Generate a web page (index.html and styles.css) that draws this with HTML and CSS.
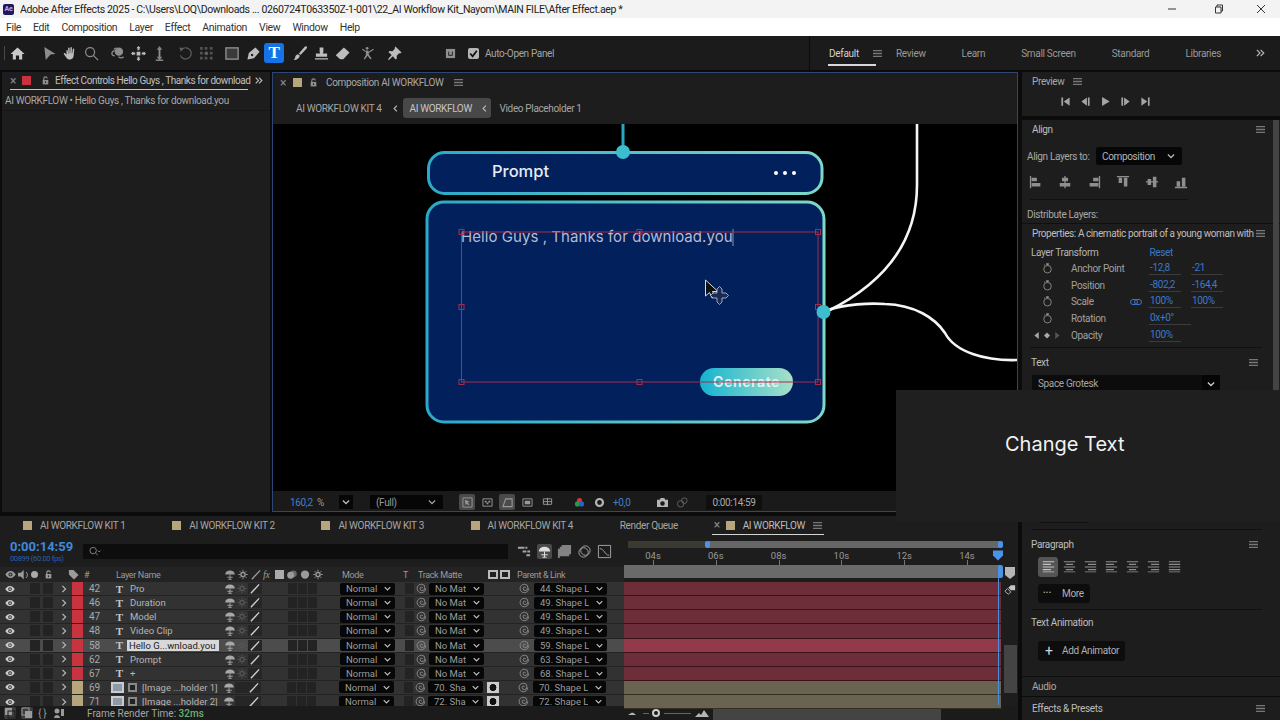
FILE: index.html
```html
<!DOCTYPE html>
<html lang="en">
<head>
    <meta charset="UTF-8">
    <meta name="viewport" content="width=device-width, initial-scale=1.0">
    <title>Adobe After Effects 2025</title>
    <link rel="stylesheet" href="styles.css">
</head>
<body>
    <svg class="defs" aria-hidden="true">
        <symbol id="i-home" viewBox="0 0 16 16"><path d="M8 1.500 15.500 8.500H13V14.500H9.700V10H6.300V14.500H3V8.500H.5Z"/></symbol>
        <symbol id="i-arrow" viewBox="0 0 16 16"><path d="M2.500 1 14.500 8.600 9 9 4 15Z"/></symbol>
        <symbol id="i-hand" viewBox="0 0 16 16"><path d="M3.600 5.200c0-1.100 1.400-1.100 1.500 0l.4 3 .3-.1-.4-5.600c0-1.100 1.500-1.100 1.600 0l.3 5.300h.4l.2-6c0-1.100 1.600-1.100 1.600 0l-.1 6.200h.4l.7-4.700c.2-1.100 1.600-.9 1.500.2l-.6 6.700c-.1 2.600-1.900 4.300-4.100 4.300-1.900 0-3-.8-4-2.500L1 8.700c-.6-1 .6-1.800 1.400-1l1.500 1.600Z"/></symbol>
        <symbol id="i-zoom" viewBox="0 0 16 16"><circle class="ln" cx="6.500" cy="6.500" r="4.800"/><path class="ln" d="M10 10 15 15"/></symbol>
        <symbol id="i-orbit" viewBox="0 0 16 16"><circle cx="9.500" cy="6" r="4.500"/><path class="ln" d="M5 5C1 6 1 10 5 10.500M4 3.500 7 2M9 11.500C11 13 13 13 14.500 11.500"/></symbol>
        <symbol id="i-move" viewBox="0 0 16 16"><path d="M7 1h2v3.500h-2ZM7 11.500h2V15H7ZM1 7h3.500v2H1ZM11.500 7H15v2h-3.500Z"/><path d="M8 0 10.200 2.500H5.800ZM8 16 5.800 13.500h4.400ZM0 8 2.500 5.800v4.400ZM16 8l-2.500 2.200V5.800ZM6 6h4v4H6Z"/></symbol>
        <symbol id="i-dolly" viewBox="0 0 16 16"><path d="M7 3h2v9H7Z"/><path d="M8 0 11 4H5ZM8 15.500 5 11.500h6ZM4 14.500h8V16H4Z" opacity=".9"/></symbol>
        <symbol id="i-rotate" viewBox="0 0 16 16"><path class="ln" d="M4 3.500A6 6 0 1 1 2.500 10"/><path d="M1.500 1.500 6.500 2 3 6Z"/></symbol>
        <symbol id="i-pan" viewBox="0 0 16 16"><path d="M1 1h3v3H1ZM6 1h3v3H6ZM11.500 1h3v3h-3ZM1 6h3v3H1ZM11.500 6h3v3h-3ZM1 11.500h3v3H1ZM6 11.500h3v3H6ZM11.500 11.500h3v3h-3Z" opacity=".8"/><circle cx="7.800" cy="7.800" r="2"/></symbol>
        <symbol id="i-rect" viewBox="0 0 16 16"><rect x="1" y="2" width="13" height="12" fill="#3a3a3a" stroke="currentColor" stroke-width="1.500"/></symbol>
        <symbol id="i-pen" viewBox="0 0 16 16"><path d="M10 1.500 14.500 6 8.500 13 1.500 14.500 3 7.500Z"/><circle cx="6.500" cy="9.500" r="1.300" fill="#222"/></symbol>
        <symbol id="i-brush" viewBox="0 0 16 16"><path d="M14.500.5c.8.8.6 1.500-.2 2.400L8 9.600 6.300 8 12.500.9c.8-.8 1.400-1 2-.4ZM5.500 8.800 7.300 10.500C6.800 13.500 4 15.200.5 15c1.500-1.100 1.700-2.100 2-3.700.3-1.400 1.700-2.400 3-2.500Z"/></symbol>
        <symbol id="i-stamp" viewBox="0 0 16 16"><path d="M6 1.500h4V6l-.6 2H14v3.500H2V8h4.600L6 6ZM1 13h14v1.500H1Z"/></symbol>
        <symbol id="i-eraser" viewBox="0 0 16 16"><path d="M9.500 1.500 15.500 7 8.800 14H5.500L.8 9.800Z"/></symbol>
        <symbol id="i-puppet" viewBox="0 0 16 16"><circle cx="6.500" cy="2.500" r="1.500"/><path d="M5.300 4.800h2.500l.6 4.200 3 4.500-1.400.7L7 10.500l-3 3.800-1-.8 2.200-4ZM8 6l5-3 .6.9-5.400 3.600Z"/><path class="ln" d="M1.500 3.500 5 6"/></symbol>
        <symbol id="i-pin" viewBox="0 0 16 16"><path d="M9 .5 15.500 7l-1.600 1-1-.3-2.600 2.600.2 3-1.300 1.200L6.300 11 2 15l-1-1 4-4.300-3.500-3.200L2.800 5.300l3 .2L8.400 3l-.3-1Z"/></symbol>
        <symbol id="i-eye" viewBox="0 0 16 16"><path d="M8 3C4.500 3 2 5.500.5 8 2 10.500 4.500 13 8 13s6-2.500 7.500-5C14 5.500 11.500 3 8 3Zm0 2a3 3 0 1 1 0 6 3 3 0 0 1 0-6Z"/><circle cx="8" cy="8" r="1.400"/></symbol>
        <symbol id="i-chev-d" viewBox="0 0 16 16"><path class="ln2" d="M3 5.500 8 10.500 13 5.500"/></symbol>
        <symbol id="i-chev-r" viewBox="0 0 16 16"><path class="ln2" d="M5.500 3 10.500 8 5.500 13"/></symbol>
        <symbol id="i-chev-l" viewBox="0 0 16 16"><path class="ln2" d="M10.500 3 5.500 8 10.500 13"/></symbol>
        <symbol id="i-more" viewBox="0 0 16 16"><path class="ln2" d="M3 3 8 8 3 13M9 3 14 8 9 13"/></symbol>
        <symbol id="i-menu" viewBox="0 0 10 10"><path d="M0 1h10v1.400H0ZM0 4.300h10v1.400H0ZM0 7.600h10V9H0Z"/></symbol>
        <symbol id="i-lock" viewBox="0 0 16 16"><path d="M3 7h10v8H3Z"/><path class="ln2" d="M5 7V4.500a3 3 0 0 1 6 0"/><rect x="7" y="9.500" width="2" height="3" fill="#222"/></symbol>
        <symbol id="i-shy" viewBox="0 0 16 16"><path d="M1 8a7 6 0 0 1 14 0Z"/><path class="ln" d="M8 8v7M4 12h8M5.500 15h5"/></symbol>
        <symbol id="i-gear" viewBox="0 0 16 16"><circle class="ln2" cx="8" cy="8" r="3"/><path class="ln" d="M8 1v3M8 12v3M1 8h3M12 8h3M3 3l2 2M11 11l2 2M13 3l-2 2M5 11l-2 2"/></symbol>
        <symbol id="i-slash" viewBox="0 0 16 16"><path class="ln2" d="M2 15 14 2"/></symbol>
        <symbol id="i-spiral" viewBox="0 0 16 16"><path class="ln" d="M14 8A6.200 6.200 0 1 1 8 1.800 5 5 0 0 1 13 7a4 4 0 0 1-4 4 3 3 0 0 1-3-3 2 2 0 0 1 2-2 1.500 1.500 0 0 1 1.500 1.500"/></symbol>
        <symbol id="i-watch" viewBox="0 0 16 16"><circle class="ln" cx="8" cy="9" r="5.500"/><path class="ln2" d="M6 1.500h4M8 3.500V1.500"/><path class="ln" d="M4.500 3.500 3 2.500"/></symbol>
        <symbol id="i-left" viewBox="0 0 16 16"><path d="M2 2h2.500v12H2ZM14 2v12L5.500 8Z"/></symbol>
        <symbol id="i-step" viewBox="0 0 16 16"><path d="M10 2v12L2 8ZM11.500 2H14v12h-2.500Z"/></symbol>
        <symbol id="i-play" viewBox="0 0 16 16"><path d="M3 1.500 14 8 3 14.500Z"/></symbol>
        <symbol id="i-align" viewBox="0 0 16 16"><path d="M1 1h1.500v14H1ZM3 3h6v4H3ZM3 9h10v4H3Z"/></symbol>
        <symbol id="i-align-c" viewBox="0 0 16 16"><path d="M7.200 1h1.500v14H7.200ZM4.500 3h7v4h-7ZM2 9h12v4H2Z"/></symbol>
        <symbol id="i-para-l" viewBox="0 0 16 16"><path d="M1 1.500h14v1.400H1ZM1 4.700h10v1.400H1ZM1 7.900h14v1.400H1ZM1 11.100h10v1.400H1ZM1 14h14v1H1Z"/></symbol>
        <symbol id="i-para-c" viewBox="0 0 16 16"><path d="M1 1.500h14v1.400H1ZM3.500 4.700h9v1.400h-9ZM1 7.900h14v1.400H1ZM3.500 11.100h9v1.400h-9ZM1 14h14v1H1Z"/></symbol>
        <symbol id="i-para-r" viewBox="0 0 16 16"><path d="M1 1.500h14v1.400H1ZM5 4.700h10v1.400H5ZM1 7.900h14v1.400H1ZM5 11.100h10v1.400H5ZM1 14h14v1H1Z"/></symbol>
        <symbol id="i-para-j" viewBox="0 0 16 16"><path d="M1 1.500h14v1.400H1ZM1 4.700h14v1.400H1ZM1 7.900h14v1.400H1ZM1 11.100h14v1.400H1ZM1 14h14v1H1Z"/></symbol>
    </svg>

    <header class="titlebar">
        <span class="ae-logo">Ae</span>
        <span class="title-text">Adobe After Effects 2025 - C:\Users\LOQ\Downloads ... 0260724T063350Z-1-001\22_AI Workflow Kit_Nayom\MAIN FILE\After Effect.aep *</span>
        <span class="win-btns">
            <svg class="win-min" viewBox="0 0 10 10"><path d="M1 5h8" /></svg>
            <svg class="win-max" viewBox="0 0 10 10"><path d="M1.500 3h5.500v6H1.500ZM3 3V1h5.500v6H7" /></svg>
            <svg class="win-close" viewBox="0 0 10 10"><path d="M1 1l8 8M9 1l-8 8" /></svg>
        </span>
    </header>
    <nav class="menubar">
        <span>File</span><span>Edit</span><span>Composition</span><span>Layer</span><span>Effect</span><span>Animation</span><span>View</span><span>Window</span><span>Help</span>
    </nav>
    <div class="toolbar">
        <div class="tools">
            <span class="tool home"><svg><use href="#i-home"/></svg></span>
            <span class="tool gap"><svg class="dim"><use href="#i-arrow"/></svg></span>
            <span class="tool"><svg><use href="#i-hand"/></svg></span>
            <span class="tool"><svg class="dim"><use href="#i-zoom"/></svg></span>
            <span class="tool gap"><svg class="dim"><use href="#i-orbit"/></svg></span>
            <span class="tool"><svg><use href="#i-move"/></svg></span>
            <span class="tool"><svg class="dim"><use href="#i-dolly"/></svg></span>
            <span class="tool gap"><svg class="faint"><use href="#i-rotate"/></svg></span>
            <span class="tool"><svg class="faint"><use href="#i-pan"/></svg></span>
            <span class="tool gap"><svg class="dim"><use href="#i-rect"/></svg></span>
            <span class="tool"><svg><use href="#i-pen"/></svg></span>
            <span class="tool tool-on">T</span>
            <span class="tool gap"><svg><use href="#i-brush"/></svg></span>
            <span class="tool"><svg><use href="#i-stamp"/></svg></span>
            <span class="tool"><svg><use href="#i-eraser"/></svg></span>
            <span class="tool gap"><svg class="dim"><use href="#i-puppet"/></svg></span>
            <span class="tool gap"><svg><use href="#i-pin"/></svg></span>
        </div>
        <div class="auto-open">
            <svg class="auto-ic" viewBox="0 0 12 12"><path d="M1 1h10v10H1Z"/><path d="M4 4v4M8 4v4M4 8h4" stroke="#1a1a1a" fill="none"/></svg>
            <span class="checkbox"><svg viewBox="0 0 10 10"><path d="M2 5l2.200 2.500L8 2.500"/></svg></span>
            <span>Auto-Open Panel</span>
        </div>
        <div class="workspaces">
            <span class="ws-active">Default</span>
            <svg class="menu-ic ws-menu"><use href="#i-menu"/></svg>
            <span>Review</span><span>Learn</span><span>Small Screen</span><span>Standard</span><span>Libraries</span>
            <svg class="ws-more"><use href="#i-more"/></svg>
        </div>
    </div>

    <main class="workspace">
        <div class="main-col">
            <div class="top-row">
                <section class="panel effects">
                    <div class="fx-tab">
                        <span class="close">×</span><i class="swatch red"></i>
                        <svg class="lock"><use href="#i-lock"/></svg>
                        <span class="fx-title">Effect Controls Hello Guys , Thanks for download</span>
                        <svg class="fx-more"><use href="#i-more"/></svg>
                    </div>
                    <div class="fx-sub">AI WORKFLOW • Hello Guys , Thanks for download.you</div>
                </section>

                <section class="panel comp">
                    <div class="comp-tab">
                        <span class="close">×</span><i class="swatch tan"></i>
                        <svg class="lock"><use href="#i-lock"/></svg>
                        <span>Composition AI WORKFLOW</span>
                        <svg class="menu-ic"><use href="#i-menu"/></svg>
                    </div>
                    <div class="crumbs">
                        <span>AI WORKFLOW KIT 4</span>
                        <svg class="crumb-chev"><use href="#i-chev-l"/></svg>
                        <span class="crumb-on">AI WORKFLOW<svg class="crumb-chev"><use href="#i-chev-l"/></svg></span>
                        <span>Video Placeholder 1</span>
                    </div>
                    <div class="viewer">
                        <svg class="art" viewBox="273 124 744 367">
                            <defs>
                                <linearGradient id="edge" gradientUnits="userSpaceOnUse" x1="426" y1="0" x2="825" y2="0">
                                    <stop offset="0" stop-color="#2aa9c8"/><stop offset="1" stop-color="#7ed8c8"/>
                                </linearGradient>
                                <linearGradient id="pill" gradientUnits="userSpaceOnUse" x1="700" y1="0" x2="793" y2="0">
                                    <stop offset="0" stop-color="#14b4d0"/><stop offset="1" stop-color="#a8e0c8"/>
                                </linearGradient>
                            </defs>
                            <path class="wire" d="M917 124V185C917 245 880 285 828 311"/>
                            <path class="wire" d="M828 310C845 304 870 303 885 304 915 305 935 318 945 333 955 352 985 361 1017 360"/>
                            <path class="link" d="M623 124V152"/>
                            <rect class="node" x="428.500" y="152.500" width="393.500" height="41" rx="16"/>
                            <rect class="node" x="427" y="202" width="397" height="220" rx="17"/>
                            <circle class="port" cx="623" cy="152" r="7"/>
                            <text class="prompt" x="492" y="177">Prompt</text>
                            <circle class="dot" cx="776" cy="173" r="2"/><circle class="dot" cx="785" cy="173" r="2"/><circle class="dot" cx="794" cy="173" r="2"/>
                            <rect class="pill" x="700" y="368" width="93" height="28" rx="14"/>
                            <text class="generate" x="746.500" y="387">Generate</text>
                            <text class="hello" x="461" y="242">Hello Guys , Thanks for download.you</text>
                            <path class="caret" d="M733 229V246"/>
                            <rect class="sel" x="461.500" y="232" width="356.500" height="150"/>
                            <rect class="grip" x="459" y="229.500" width="5" height="5"/><rect class="grip" x="637" y="229.500" width="5" height="5"/><rect class="grip" x="815.500" y="229.500" width="5" height="5"/>
                            <rect class="grip" x="459" y="304.500" width="5" height="5"/><rect class="grip" x="815.500" y="304.500" width="5" height="5"/>
                            <rect class="grip" x="459" y="379.500" width="5" height="5"/><rect class="grip" x="637" y="379.500" width="5" height="5"/><rect class="grip" x="815.500" y="379.500" width="5" height="5"/>
                            <circle class="port" cx="823.500" cy="312" r="7"/>
                            <path class="pointer" d="M705.500 280V296L709.500 292.500 712 298 715 297 712.500 291.500H718Z"/>
                            <path class="pointer-move" d="M719.500 289.500 722 292V296H726L728.500 298.500 726 301H722V305L719.500 307.500 717 305V301H713L710.500 298.500 713 296H717V292Z" transform="translate(0 -3)"/>
                        </svg>
                    </div>
                    <div class="comp-foot">
                        <span class="blue zoom-val">160,2</span><span class="pct">%</span>
                        <span class="mini-sel"><svg class="chev"><use href="#i-chev-d"/></svg></span>
                        <span class="res-sel">(Full)<svg class="chev"><use href="#i-chev-d"/></svg></span>
                        <span class="foot-ic foot-on"><svg viewBox="0 0 12 12"><path d="M1 1h10v10H1Z" fill="none" stroke="currentColor"/><path d="M3 3l5 2-2 1 2 2-1 1-2-2-1 2Z"/></svg></span>
                        <span class="foot-ic"><svg viewBox="0 0 12 12"><path d="M1 2h10v8H1Z" fill="none" stroke="currentColor"/><path d="M3 4h2v2H3ZM7 4h2v2H7ZM5 6h2v2H5Z"/></svg></span>
                        <span class="foot-ic foot-on"><svg viewBox="0 0 12 12"><path d="M1 10.500 4 2h7v8.500Z" fill="none" stroke="currentColor" stroke-width="1.200"/></svg></span>
                        <span class="foot-ic"><svg viewBox="0 0 12 12"><path d="M1 2h10v8H1Z" fill="none" stroke="currentColor"/><path d="M3 4h6v4H3Z"/></svg></span>
                        <span class="foot-ic"><svg viewBox="0 0 12 12"><path d="M1.500 2h9v6h-9ZM6 1v8M1 5h10" fill="none" stroke="currentColor"/></svg></span>
                        <span class="rgb"><svg viewBox="0 0 12 12"><circle cx="6" cy="4" r="2.800" fill="#d33"/><circle cx="3.800" cy="7.500" r="2.800" fill="#2a9a4a"/><circle cx="8.200" cy="7.500" r="2.800" fill="#2a60c8"/></svg></span>
                        <span class="exposure"><svg viewBox="0 0 12 12"><circle cx="6" cy="6" r="3.800" fill="none" stroke="currentColor" stroke-width="2.400"/></svg></span>
                        <span class="blue exp-val">+0,0</span>
                        <span class="cam"><svg viewBox="0 0 14 12"><path d="M1 3h3l1-2h4l1 2h3v8H1Zm6 1.500a2.500 2.500 0 1 0 0 5 2.500 2.500 0 0 0 0-5Z"/></svg></span>
                        <span class="snap"><svg viewBox="0 0 14 12"><circle cx="5" cy="7.500" r="3.500" fill="none" stroke="currentColor"/><circle cx="9" cy="4" r="3" fill="none" stroke="currentColor"/></svg></span>
                        <span class="timecode">0:00:14:59</span>
                    </div>
                </section>
            </div>

            <section class="panel timeline">
                <div class="tl-tabs">
                    <span class="tl-tab"><i class="swatch tan"></i>AI WORKFLOW KIT 1</span>
                    <span class="tl-tab"><i class="swatch tan"></i>AI WORKFLOW KIT 2</span>
                    <span class="tl-tab"><i class="swatch tan"></i>AI WORKFLOW KIT 3</span>
                    <span class="tl-tab"><i class="swatch tan"></i>AI WORKFLOW KIT 4</span>
                    <span class="tl-tab">Render Queue</span>
                    <span class="tl-tab tl-tab-on"><span class="close">×</span><i class="swatch tan"></i>AI WORKFLOW<svg class="menu-ic"><use href="#i-menu"/></svg></span>
                </div>
                <div class="tl-body">
                    <div class="tl-left">
                        <div class="tl-ctrl">
                            <div class="tl-time">
                                <div class="tl-tc">0:00:14:59</div>
                                <div class="tl-fps">00899 (60.00 fps)</div>
                            </div>
                            <div class="tl-search"><svg viewBox="0 0 14 12"><circle cx="5" cy="5" r="3.500" fill="none" stroke="currentColor"/><path d="M7.500 7.500 10 10M10 5l1.500 1.500L13 5" fill="none" stroke="currentColor"/></svg></div>
                            <div class="tl-btns">
                                <svg viewBox="0 0 16 16"><path d="M1 3h7v2H1ZM9 3h2v2H9ZM6 7h4v2H6ZM11 7h3v2h-3ZM10 11h4v2h-4Z" /></svg>
                                <svg class="tl-btn-on" viewBox="0 0 16 16"><use href="#i-shy"/></svg>
                                <svg viewBox="0 0 16 16"><path d="M5 1h10v10h-2v2H3v2H1V5h2V3h2Z" opacity=".75"/></svg>
                                <svg viewBox="0 0 16 16"><circle cx="7" cy="9" r="5" fill="none" stroke="currentColor"/><circle cx="9" cy="7" r="5" fill="none" stroke="currentColor"/></svg>
                                <svg viewBox="0 0 16 16"><path d="M1.500 1.500h13v13h-13Z" fill="none" stroke="currentColor"/><path d="M3 5c5 0 5 7 10 7" fill="none" stroke="currentColor"/></svg>
                            </div>
                        </div>
                        <div class="tl-head">
                            <svg class="h-eye"><use href="#i-eye"/></svg>
                            <svg class="h-ic"><path d="M0 4h3l3-3v10L3 8H0Z" transform="scale(.95)"/><path d="M8 3a4 4 0 0 1 0 6" fill="none" stroke="currentColor"/></svg>
                            <i class="h-dot"></i>
                            <svg class="h-lock"><use href="#i-lock"/></svg>
                            <svg class="h-tag" viewBox="0 0 12 12"><path d="M1 1h5l5.500 5.500-5 5L1 6Z"/></svg>
                            <span class="h-num">#</span>
                            <span class="h-name">Layer Name</span>
                            <svg class="h-sw"><use href="#i-shy"/></svg>
                            <svg class="h-sw"><use href="#i-gear"/></svg>
                            <svg class="h-sw"><use href="#i-slash"/></svg>
                            <em class="h-fx">fx</em>
                            <i class="h-sq"></i>
                            <svg class="h-sw" viewBox="0 0 16 16"><circle cx="6" cy="9" r="5"/><circle cx="10" cy="7" r="5" opacity=".6"/></svg>
                            <svg class="h-sw" viewBox="0 0 16 16"><path d="M8 2a6 6 0 1 0 0 12 6 6 0 0 0 0-12Z"/></svg>
                            <svg class="h-sw"><use href="#i-gear"/></svg>
                            <span class="h-mode">Mode</span>
                            <span class="h-t">T</span>
                            <span class="h-matte">Track Matte</span>
                            <i class="h-mat"></i><i class="h-mat"></i>
                            <span class="h-parent">Parent &amp; Link</span>
                        </div>
                        <div class="layers">
                            <div class="layer"><svg class="eye"><use href="#i-eye"/></svg><i class="sw-a"></i><i class="sw-b"></i><svg class="chev-r"><use href="#i-chev-r"/></svg><i class="tag red"></i><span class="num">42</span><span class="t-ic">T</span><span class="name">Pro</span><svg class="s-ic"><use href="#i-shy"/></svg><svg class="s-ic s-dim"><use href="#i-gear"/></svg><svg class="s-slash"><use href="#i-slash"/></svg><i class="b1"></i><i class="b2"></i><i class="b2"></i><span class="mode">Normal<svg><use href="#i-chev-d"/></svg></span><i class="b3"></i><svg class="spiral"><use href="#i-spiral"/></svg><span class="matte"><b>No Mat</b><svg><use href="#i-chev-d"/></svg></span><i class="m-box"></i><svg class="spiral sp2"><use href="#i-spiral"/></svg><span class="parent"><b>44. Shape L</b><svg><use href="#i-chev-d"/></svg></span></div>
                            <div class="layer"><svg class="eye"><use href="#i-eye"/></svg><i class="sw-a"></i><i class="sw-b"></i><svg class="chev-r"><use href="#i-chev-r"/></svg><i class="tag red"></i><span class="num">46</span><span class="t-ic">T</span><span class="name">Duration</span><svg class="s-ic"><use href="#i-shy"/></svg><svg class="s-ic s-dim"><use href="#i-gear"/></svg><svg class="s-slash"><use href="#i-slash"/></svg><i class="b1"></i><i class="b2"></i><i class="b2"></i><span class="mode">Normal<svg><use href="#i-chev-d"/></svg></span><i class="b3"></i><svg class="spiral"><use href="#i-spiral"/></svg><span class="matte"><b>No Mat</b><svg><use href="#i-chev-d"/></svg></span><i class="m-box"></i><svg class="spiral sp2"><use href="#i-spiral"/></svg><span class="parent"><b>49. Shape L</b><svg><use href="#i-chev-d"/></svg></span></div>
                            <div class="layer"><svg class="eye"><use href="#i-eye"/></svg><i class="sw-a"></i><i class="sw-b"></i><svg class="chev-r"><use href="#i-chev-r"/></svg><i class="tag red"></i><span class="num">47</span><span class="t-ic">T</span><span class="name">Model</span><svg class="s-ic"><use href="#i-shy"/></svg><svg class="s-ic s-dim"><use href="#i-gear"/></svg><svg class="s-slash"><use href="#i-slash"/></svg><i class="b1"></i><i class="b2"></i><i class="b2"></i><span class="mode">Normal<svg><use href="#i-chev-d"/></svg></span><i class="b3"></i><svg class="spiral"><use href="#i-spiral"/></svg><span class="matte"><b>No Mat</b><svg><use href="#i-chev-d"/></svg></span><i class="m-box"></i><svg class="spiral sp2"><use href="#i-spiral"/></svg><span class="parent"><b>49. Shape L</b><svg><use href="#i-chev-d"/></svg></span></div>
                            <div class="layer"><svg class="eye"><use href="#i-eye"/></svg><i class="sw-a"></i><i class="sw-b"></i><svg class="chev-r"><use href="#i-chev-r"/></svg><i class="tag red"></i><span class="num">48</span><span class="t-ic">T</span><span class="name">Video Clip</span><svg class="s-ic"><use href="#i-shy"/></svg><svg class="s-ic s-dim"><use href="#i-gear"/></svg><svg class="s-slash"><use href="#i-slash"/></svg><i class="b1"></i><i class="b2"></i><i class="b2"></i><span class="mode">Normal<svg><use href="#i-chev-d"/></svg></span><i class="b3"></i><svg class="spiral"><use href="#i-spiral"/></svg><span class="matte"><b>No Mat</b><svg><use href="#i-chev-d"/></svg></span><i class="m-box"></i><svg class="spiral sp2"><use href="#i-spiral"/></svg><span class="parent"><b>49. Shape L</b><svg><use href="#i-chev-d"/></svg></span></div>
                            <div class="layer layer-on"><svg class="eye"><use href="#i-eye"/></svg><i class="sw-a"></i><i class="sw-b"></i><svg class="chev-r"><use href="#i-chev-r"/></svg><i class="tag red"></i><span class="num">58</span><span class="t-ic">T</span><span class="name"><span class="name-edit">Hello G...wnload.you</span></span><svg class="s-ic"><use href="#i-shy"/></svg><svg class="s-ic s-dim"><use href="#i-gear"/></svg><svg class="s-slash"><use href="#i-slash"/></svg><i class="b1"></i><i class="b2"></i><i class="b2"></i><span class="mode">Normal<svg><use href="#i-chev-d"/></svg></span><i class="b3"></i><svg class="spiral"><use href="#i-spiral"/></svg><span class="matte"><b>No Mat</b><svg><use href="#i-chev-d"/></svg></span><i class="m-box"></i><svg class="spiral sp2"><use href="#i-spiral"/></svg><span class="parent"><b>59. Shape L</b><svg><use href="#i-chev-d"/></svg></span></div>
                            <div class="layer"><svg class="eye"><use href="#i-eye"/></svg><i class="sw-a"></i><i class="sw-b"></i><svg class="chev-r"><use href="#i-chev-r"/></svg><i class="tag red"></i><span class="num">62</span><span class="t-ic">T</span><span class="name">Prompt</span><svg class="s-ic"><use href="#i-shy"/></svg><svg class="s-ic s-dim"><use href="#i-gear"/></svg><svg class="s-slash"><use href="#i-slash"/></svg><i class="b1"></i><i class="b2"></i><i class="b2"></i><span class="mode">Normal<svg><use href="#i-chev-d"/></svg></span><i class="b3"></i><svg class="spiral"><use href="#i-spiral"/></svg><span class="matte"><b>No Mat</b><svg><use href="#i-chev-d"/></svg></span><i class="m-box"></i><svg class="spiral sp2"><use href="#i-spiral"/></svg><span class="parent"><b>63. Shape L</b><svg><use href="#i-chev-d"/></svg></span></div>
                            <div class="layer"><svg class="eye"><use href="#i-eye"/></svg><i class="sw-a"></i><i class="sw-b"></i><svg class="chev-r"><use href="#i-chev-r"/></svg><i class="tag red"></i><span class="num">67</span><span class="t-ic">T</span><span class="name">+</span><svg class="s-ic"><use href="#i-shy"/></svg><svg class="s-ic s-dim"><use href="#i-gear"/></svg><svg class="s-slash"><use href="#i-slash"/></svg><i class="b1"></i><i class="b2"></i><i class="b2"></i><span class="mode">Normal<svg><use href="#i-chev-d"/></svg></span><i class="b3"></i><svg class="spiral"><use href="#i-spiral"/></svg><span class="matte"><b>No Mat</b><svg><use href="#i-chev-d"/></svg></span><i class="m-box"></i><svg class="spiral sp2"><use href="#i-spiral"/></svg><span class="parent"><b>68. Shape L</b><svg><use href="#i-chev-d"/></svg></span></div>
                            <div class="layer"><svg class="eye"><use href="#i-eye"/></svg><i class="sw-a"></i><i class="sw-b"></i><svg class="chev-r"><use href="#i-chev-r"/></svg><i class="tag tan"></i><span class="num">69</span><i class="thumb"></i><span class="name name-img"><i class="comp-ic"></i>[Image ...holder 1]</span><svg class="s-ic"><use href="#i-shy"/></svg><i class="s-gap"></i><svg class="s-slash"><use href="#i-slash"/></svg><i class="b1"></i><i class="b2"></i><i class="b2"></i><span class="mode">Normal<svg><use href="#i-chev-d"/></svg></span><i class="b3"></i><svg class="spiral"><use href="#i-spiral"/></svg><span class="matte"><b>70. Sha</b><svg><use href="#i-chev-d"/></svg></span><i class="m-box m-on"></i><svg class="spiral sp2"><use href="#i-spiral"/></svg><span class="parent"><b>70. Shape L</b><svg><use href="#i-chev-d"/></svg></span></div>
                            <div class="layer"><svg class="eye"><use href="#i-eye"/></svg><i class="sw-a"></i><i class="sw-b"></i><svg class="chev-r"><use href="#i-chev-r"/></svg><i class="tag tan"></i><span class="num">71</span><i class="thumb"></i><span class="name name-img"><i class="comp-ic"></i>[Image ...holder 2]</span><svg class="s-ic"><use href="#i-shy"/></svg><i class="s-gap"></i><svg class="s-slash"><use href="#i-slash"/></svg><i class="b1"></i><i class="b2"></i><i class="b2"></i><span class="mode">Normal<svg><use href="#i-chev-d"/></svg></span><i class="b3"></i><svg class="spiral"><use href="#i-spiral"/></svg><span class="matte"><b>72. Sha</b><svg><use href="#i-chev-d"/></svg></span><i class="m-box m-on"></i><svg class="spiral sp2"><use href="#i-spiral"/></svg><span class="parent"><b>72. Shape L</b><svg><use href="#i-chev-d"/></svg></span></div>
                        </div>
                    </div>
                    <div class="tl-right">
                        <div class="tl-nav"><i class="nav-fill"></i></div>
                        <div class="tl-ruler"><span>04s</span><span>06s</span><span>08s</span><span>10s</span><span>12s</span><span>14s</span></div>
                        <div class="tl-work"><i class="work-cap"></i></div>
                        <div class="bars">
                            <i class="bar bar-red"></i><i class="bar bar-red"></i><i class="bar bar-red"></i><i class="bar bar-red"></i><i class="bar bar-red bar-on"></i><i class="bar bar-red"></i><i class="bar bar-red"></i><i class="bar bar-tan"></i><i class="bar bar-tan"></i>
                        </div>
                        <i class="playhead"></i>
                        <svg class="play-top" viewBox="0 0 10 10"><path d="M0 0h10v5L5 10 0 5Z"/></svg>
                        <svg class="end-flag" viewBox="0 0 10 12"><path d="M0 0h10v8l-5 4-5-4Z"/></svg>
                        <svg class="end-mark" viewBox="0 0 14 12"><path d="M8 1h5v6H8L5 4Z"/><path d="M4 5 8 9 5 11.500 1 8Z" fill="none" stroke="currentColor"/></svg>
                        <i class="tl-vscroll"></i>
                    </div>
                </div>
                <div class="tl-foot">
                    <div class="foot-left">
                        <svg viewBox="0 0 12 12" class="fl-on"><rect x="1" y="1" width="7" height="7"/><rect x="4" y="4" width="7" height="7" fill="none" stroke="#1d1d1d"/></svg>
                        <svg viewBox="0 0 12 12" class="fl-on"><rect x="1" y="1" width="7" height="7" fill="none" stroke="currentColor"/><rect x="4" y="4" width="7" height="7"/></svg>
                        <span class="braces">{ }</span>
                        <svg viewBox="0 0 12 12"><circle cx="4" cy="4" r="2.500"/><path d="M1 11c0-4 6-4 6 0ZM8 2h3v7H8Z"/></svg>
                        <span class="render">Frame Render Time: <b>32ms</b></span>
                    </div>
                    <div class="foot-zoom">
                        <svg viewBox="0 0 10 6"><path d="M0 5h10L6.500 2h-2Z"/></svg>
                        <i class="fz-short"></i><i class="fz-knob"></i><i class="fz-long"></i>
                        <svg class="fz-big" viewBox="0 0 14 7"><path d="M0 7l4-4 2 2 3-5 5 7Z"/></svg>
                    </div>
                    <i class="tl-hscroll"></i>
                </div>
            </section>
        </div>

        <div class="side-col">
            <section class="panel preview">
                <div class="p-head"><span>Preview</span><svg class="menu-ic"><use href="#i-menu"/></svg></div>
                <div class="transport">
                    <svg><use href="#i-left"/></svg>
                    <svg><use href="#i-step"/></svg>
                    <svg class="tr-play"><use href="#i-play"/></svg>
                    <svg class="flip"><use href="#i-step"/></svg>
                    <svg class="flip"><use href="#i-left"/></svg>
                </div>
            </section>
            <section class="panel align">
                <div class="a-head"><span>Align</span><svg class="menu-ic end"><use href="#i-menu"/></svg></div>
                <div class="align-to"><span class="align-label">Align Layers to:</span><span class="dark-sel">Composition<svg><use href="#i-chev-d"/></svg></span></div>
                <div class="align-icons">
                    <svg><use href="#i-align"/></svg>
                    <svg><use href="#i-align-c"/></svg>
                    <svg class="flip"><use href="#i-align"/></svg>
                    <svg class="rot"><use href="#i-align"/></svg>
                    <svg class="rot"><use href="#i-align-c"/></svg>
                    <svg class="rot-b"><use href="#i-align"/></svg>
                </div>
                <hr class="sep sep-short">
                <div class="dist">Distribute Layers:</div>
                <div class="props-head"><span class="props-title">Properties: A cinematic portrait of a young woman with</span><svg class="menu-ic"><use href="#i-menu"/></svg></div>
                <div class="lt-head"><span>Layer Transform</span><span class="reset">Reset</span></div>
                <div class="prop"><svg class="watch"><use href="#i-watch"/></svg><span class="p-name">Anchor Point</span><span class="val">-12,8</span><span class="val">-21</span></div>
                <div class="prop"><svg class="watch"><use href="#i-watch"/></svg><span class="p-name">Position</span><span class="val">-802,2</span><span class="val">-164,4</span></div>
                <div class="prop"><svg class="watch"><use href="#i-watch"/></svg><span class="p-name p-link">Scale<svg viewBox="0 0 12 8"><rect x=".5" y="1.500" width="7" height="5" rx="2.500"/><rect x="4.500" y="1.500" width="7" height="5" rx="2.500"/></svg></span><span class="val">100%</span><span class="val">100%</span></div>
                <div class="prop"><svg class="watch"><use href="#i-watch"/></svg><span class="p-name">Rotation</span><span class="val val-wide">0x+0°</span></div>
                <div class="prop"><span class="keys"><svg viewBox="0 0 6 8"><path d="M5 0v8L0 4Z"/></svg><svg viewBox="0 0 8 8"><path d="M4 0l4 4-4 4-4-4Z"/></svg><svg class="k-dim" viewBox="0 0 6 8"><path d="M1 0v8l5-4Z"/></svg></span><span class="p-name">Opacity</span><span class="val">100%</span></div>
                <hr class="sep sep-props">
                <div class="s-head s-text"><span>Text</span><svg class="menu-ic"><use href="#i-menu"/></svg></div>
                <div class="font-sel"><span>Space Grotesk</span><i><svg><use href="#i-chev-d"/></svg></i></div>
                <div class="covered"><hr class="stub"></div>
                <hr class="sep sep-para">
                <div class="s-head s-para"><span>Paragraph</span><svg class="menu-ic"><use href="#i-menu"/></svg></div>
                <div class="para-btns">
                    <span class="pb-on"><svg><use href="#i-para-l"/></svg></span>
                    <span><svg><use href="#i-para-c"/></svg></span>
                    <span><svg><use href="#i-para-r"/></svg></span>
                    <span><svg><use href="#i-para-l"/></svg></span>
                    <span><svg><use href="#i-para-c"/></svg></span>
                    <span><svg><use href="#i-para-r"/></svg></span>
                    <span><svg><use href="#i-para-j"/></svg></span>
                </div>
                <div class="btn-more"><span class="dots">•••</span>More</div>
                <hr class="sep sep-more">
                <div class="s-head s-anim"><span>Text Animation</span></div>
                <div class="btn-add"><span class="plus">+</span>Add Animator</div>
                <hr class="sep-full">
                <div class="audio">Audio</div>
                <i class="scroll-thumb"></i>
            </section>
            <section class="panel fx-presets"><span>Effects &amp; Presets</span><svg class="menu-ic"><use href="#i-menu"/></svg></section>
        </div>
    </main>

    <div class="caption"><span>Change Text</span></div>
</body>
</html>
```

FILE: styles.css
```css
* {
    box-sizing: border-box;
}
html, body {
    margin: 0;
    width: 1280px;
    height: 720px;
    overflow: hidden;
}
body {
    position: relative;
    font-family: Roboto, "Liberation Sans", sans-serif;
    font-size: 10px;
    letter-spacing: -.35px;
    color: #ababab;
    background: #0b0b0b;
}
svg {
    fill: currentColor;
    display: block;
}
i {
    display: block;
    font-style: normal;
}
hr {
    margin: 0;
    border: 0;
}
.defs {
    position: absolute;
    width: 0;
    height: 0;
}
.ln {
    fill: none;
    stroke: currentColor;
    stroke-width: 1.3;
}
.ln2 {
    fill: none;
    stroke: currentColor;
    stroke-width: 2;
}
.blue {
    color: #3f7fd0;
}
.close {
    color: #8a8a8a;
    font-size: 12px;
    line-height: 1;
}
.swatch {
    width: 9px;
    height: 9px;
}
.red {
    background: #c8333f;
}
.tan {
    background: #b7a57c;
}
.menu-ic {
    width: 9px;
    height: 9px;
    color: #777;
}
.flip {
    transform: scaleX(-1);
}

/* window chrome */
.titlebar {
    height: 18px;
    background: #f3f3f3;
    color: #222;
    display: flex;
    align-items: center;
    padding-left: 3px;
    font-size: 10.5px;
}
.ae-logo {
    width: 11px;
    height: 11px;
    background: #1e1a5a;
    color: #b8a8ff;
    font-size: 7px;
    font-weight: 700;
    text-align: center;
    line-height: 11px;
    border-radius: 2px;
    margin-right: 6px;
}
.win-btns {
    margin-left: auto;
    display: flex;
    align-items: center;
}
.win-btns svg {
    width: 10px;
    height: 10px;
    fill: none;
    stroke: #333;
}
.win-min {
    margin-right: 37px;
}
.win-max {
    margin-right: 32px;
}
.win-close {
    margin-right: 14px;
}
.menubar {
    height: 18px;
    background: #fff;
    color: #333;
    display: flex;
    align-items: center;
    gap: 12px;
    padding-left: 6px;
    font-size: 10.5px;
}

/* tools */
.toolbar {
    height: 34px;
    background: #1b1b1b;
    display: flex;
    align-items: center;
}
.tools {
    display: flex;
    align-items: center;
    padding-left: 4px;
    width: 424px;
}
.tools::before {
    content: "";
    width: 1px;
    height: 14px;
    margin-right: 2px;
    background: #4a4a4a;
}
.tool {
    width: 21px;
    height: 21px;
    display: flex;
    align-items: center;
    justify-content: center;
    color: #bdbdbd;
}
.tool svg {
    width: 15px;
    height: 15px;
}
.tool .dim {
    color: #8d8d8d;
}
.tool .faint {
    color: #5f5f5f;
}
.tool.home {
    margin-right: 6px;
    color: #c9c9c9;
}
.tool.gap {
    margin-left: 5px;
}
.tool-on {
    width: 20px;
    height: 20px;
    background: #1473e6;
    color: #fff;
    border-radius: 3px;
    font: 700 17px "Liberation Serif", serif;
    margin: 0 1px 0 0;
}
.auto-open {
    display: flex;
    align-items: center;
    height: 100%;
    padding-left: 21px;
    width: 385px;
    color: #a5a5a5;
}
.auto-ic {
    width: 11px;
    height: 11px;
    color: #8f8f8f;
}
.checkbox {
    width: 11px;
    height: 11px;
    background: #b5b5b5;
    border-radius: 2px;
    margin: 0 6px 0 12px;
}
.checkbox svg {
    fill: none;
    stroke: #111;
    stroke-width: 1.6;
}
.workspaces {
    height: 100%;
    flex: 1;
    display: flex;
    align-items: center;
    gap: 36px;
    padding-left: 19px;
    border-left: 1px solid #0c0c0c;
    color: #999;
    white-space: nowrap;
    letter-spacing: -.3px;
}
.ws-active {
    position: relative;
    color: #d2d2d2;
}
.ws-active::after {
    content: "";
    position: absolute;
    left: -1px;
    right: -17px;
    bottom: -7px;
    height: 2px;
    background: #d8d8d8;
}
.ws-menu {
    margin: 0 -22px 0 -22px;
}
.ws-more {
    width: 10px;
    height: 10px;
    margin-left: -2px;
    color: #b5b5b5;
}

/* layout */
.workspace {
    height: 650px;
    display: flex;
    background: #0b0b0b;
}
.main-col {
    width: 1018px;
    flex: none;
}
.side-col {
    width: 258px;
    margin-left: 4px;
    padding-top: 2px;
    display: flex;
    flex-direction: column;
}
.top-row {
    height: 442px;
    padding: 2px 0 0 2px;
    display: flex;
    gap: 2px;
}
.panel {
    background: #1d1d1d;
    position: relative;
}

/* effect controls */
.effects {
    width: 268px;
    color: #a8a8a8;
}
.fx-tab {
    height: 18px;
    margin: 0 22px 0 8px;
    display: flex;
    align-items: center;
    position: relative;
    border-bottom: 1px solid #c8c8c8;
    color: #c0c0c0;
}
.fx-tab .swatch {
    margin: 0 0 0 6px;
}
.lock {
    width: 9px;
    height: 9px;
    color: #909090;
}
.fx-tab .lock {
    margin-left: 10px;
}
.fx-title {
    margin-left: 5px;
    width: 193px;
    white-space: nowrap;
    letter-spacing: -.45px;
}
.fx-more {
    position: absolute;
    right: -15px;
    width: 9px;
    height: 9px;
    color: #bbb;
}
.fx-sub {
    padding: 5px 0 0 3px;
    height: 21px;
    border-bottom: 1px solid #161616;
    white-space: nowrap;
}

/* composition */
.comp {
    width: 746px;
    display: flex;
    flex-direction: column;
    border: 1px solid #2e4674;
}
.comp-tab {
    height: 19px;
    display: flex;
    align-items: center;
    padding-left: 7px;
    color: #a8a8a8;
}
.comp-tab .swatch {
    margin-left: 7px;
}
.comp-tab .lock {
    margin: 0 8px 0 7px;
}
.comp-tab .menu-ic {
    margin-left: 10px;
}
.crumbs {
    height: 32px;
    display: flex;
    align-items: center;
    padding-left: 23px;
    color: #a5a5a5;
}
.crumb-chev {
    width: 9px;
    height: 9px;
    color: #bbb;
}
.crumbs > .crumb-chev {
    margin: 0 3px 0 9px;
}
.crumb-on {
    width: 88px;
    height: 20px;
    margin-right: 9px;
    padding: 0 2px 0 7px;
    border-radius: 3px;
    background: #484848;
    color: #c5c5c5;
    display: flex;
    align-items: center;
    justify-content: space-between;
}
.viewer {
    height: 367px;
    background: #000;
}
.art {
    width: 744px;
    height: 367px;
    fill: none;
}
.wire {
    fill: none;
    stroke: #f4f6f5;
    stroke-width: 2.6;
}
.link {
    fill: none;
    stroke: #2aa7bd;
    stroke-width: 3;
}
.node {
    fill: #01205c;
    stroke: url(#edge);
    stroke-width: 3;
}
.port {
    fill: #3cbecf;
}
.prompt {
    fill: #e8ebf2;
    font: 500 16.5px Inter, sans-serif;
    letter-spacing: 0;
}
.dot {
    fill: #fff;
}
.pill {
    fill: url(#pill);
}
.generate {
    fill: #e6f3f0;
    font: 600 14px Inter, sans-serif;
    text-anchor: middle;
    letter-spacing: .6px;
}
.hello {
    fill: #b5bcd2;
    font: 400 15px Inter, sans-serif;
    letter-spacing: .06px;
}
.caret {
    fill: none;
    stroke: #8d94ab;
}
.sel {
    fill: none;
    stroke: #a52c4b;
}
.grip {
    fill: none;
    stroke: #a52c4b;
}
.pointer {
    fill: #111;
    stroke: #d8d8d8;
    stroke-width: 1;
}
.pointer-move {
    fill: #1a2a55;
    stroke: #c8c8c8;
    stroke-width: .8;
}
.comp-foot {
    flex: 1;
    display: flex;
    align-items: center;
    background: #1a1a1a;
    padding: 2px 0 0 17px;
}
.zoom-val {
    width: 27px;
}
.pct {
    width: 22px;
    color: #999;
}
.chev {
    width: 10px;
    height: 10px;
}
.mini-sel {
    width: 14px;
    height: 14px;
    background: #060606;
    display: flex;
    align-items: center;
    justify-content: center;
    color: #bbb;
}
.res-sel {
    width: 73px;
    height: 14px;
    margin: 0 16px 0 17px;
    padding: 0 6px;
    background: #060606;
    display: flex;
    align-items: center;
    justify-content: space-between;
    color: #999;
}
.foot-ic {
    width: 16px;
    height: 16px;
    margin-right: 4px;
    display: flex;
    align-items: center;
    justify-content: center;
    color: #999;
    border-radius: 2px;
}
.foot-ic svg, .rgb svg, .exposure svg {
    width: 11px;
    height: 11px;
}
.foot-on {
    background: #4a4a4a;
}
.rgb {
    margin-left: 15px;
}
.exposure {
    margin-left: 9px;
    color: #b5b5b5;
}
.exp-val {
    margin: 0 0 0 8px;
    width: 43px;
}
.cam svg, .snap svg {
    width: 13px;
    height: 11px;
}
.cam {
    color: #b5b5b5;
}
.snap {
    margin-left: 7px;
    color: #666;
}
.timecode {
    margin-left: 17px;
    width: 56px;
    height: 15px;
    line-height: 15px;
    text-align: center;
    background: #0f0f0f;
    color: #aaa;
}

/* timeline */
.timeline {
    height: 204px;
    margin-top: 4px;
    display: flex;
    flex-direction: column;
}
.tl-tabs {
    height: 19px;
    padding-left: 23px;
    display: flex;
    align-items: center;
    gap: 46.700px;
    color: #a5a5a5;
}
.tl-tab {
    display: flex;
    align-items: center;
    height: 100%;
}
.tl-tab .swatch {
    margin-right: 8px;
}
.tl-tab-on {
    margin-left: -13px;
    padding: 0 2px;
    border-bottom: 1px solid #d5d5d5;
    color: #bbb;
}
.tl-tab-on .close {
    margin-right: 6px;
}
.tl-tab-on .menu-ic {
    margin-left: 8px;
}
.tl-body {
    height: 171px;
    display: flex;
}
.tl-left {
    width: 624px;
    flex: none;
}
.tl-ctrl {
    height: 32px;
    display: flex;
    align-items: center;
    padding-left: 10px;
}
.tl-time {
    width: 73px;
}
.tl-tc {
    color: #3f89dc;
    font-size: 13px;
    font-weight: 700;
    line-height: 14px;
    letter-spacing: 0;
}
.tl-fps {
    color: #2b5fa8;
    font-size: 7.5px;
    line-height: 9px;
}
.tl-search {
    width: 425px;
    height: 15px;
    background: #0d0d0d;
    color: #888;
    padding: 2px 0 0 5px;
}
.tl-search svg {
    width: 14px;
    height: 11px;
}
.tl-btns {
    margin-left: 9px;
    display: flex;
    gap: 5px;
    align-items: center;
    color: #a5a5a5;
}
.tl-btns svg {
    width: 15px;
    height: 15px;
}
.tl-btn-on {
    background: #4a4a4a;
    border-radius: 2px;
    color: #ddd;
    padding: 1px;
}
.tl-head {
    height: 15px;
    display: flex;
    align-items: center;
    background: #232323;
    color: #9b9b9b;
    font-size: 9px;
    white-space: nowrap;
}
.tl-head svg {
    width: 11px;
    height: 11px;
    flex: none;
}
.h-eye {
    margin-left: 5px;
}
.h-ic {
    margin-left: 2px;
}
.h-dot {
    width: 7px;
    height: 7px;
    margin-left: 2px;
    border-radius: 50%;
    background: #aaa;
}
.tl-head .h-lock {
    margin-left: 6px;
    width: 9px;
    height: 9px;
}
.tl-head .h-tag {
    margin-left: 15px;
}
.h-num {
    width: 29px;
    padding-left: 5px;
}
.h-name {
    width: 116px;
    padding-left: 8px;
}
.tl-head .h-sw {
    width: 12px;
    height: 11px;
    margin-right: 1px;
}
.h-fx {
    width: 12px;
    font: italic 10px "Liberation Serif", serif;
}
.h-sq {
    width: 9px;
    height: 9px;
    background: #aaa;
    margin-right: 2px;
}
.h-mode {
    margin-left: 17px;
    width: 61px;
}
.h-t {
    width: 15px;
}
.h-matte {
    width: 70px;
}
.h-mat {
    width: 10px;
    height: 9px;
    margin-right: 2px;
    border: 2px solid #bbb;
    background: #222;
}
.h-parent {
    margin-left: 5px;
}
.layers {
    height: 124px;
    overflow: hidden;
}
.layer {
    height: 14.125px;
    display: flex;
    align-items: center;
    background: #323232;
    border-bottom: 1px solid #232323;
    color: #a8a8a8;
    font-size: 9.500px;
    letter-spacing: 0;
    white-space: nowrap;
}
.layer-on {
    background: #4c4c4c;
}
.eye {
    width: 20px;
    height: 10px;
    flex: none;
    color: #ccc;
}
.sw-a, .sw-b {
    width: 10px;
    height: 11px;
    flex: none;
    background: #232323;
}
.sw-a {
    margin-left: 10px;
}
.sw-b {
    margin-left: 3px;
}
.chev-r {
    width: 10px;
    height: 10px;
    margin-left: 6px;
    flex: none;
    color: #b5b5b5;
}
.tag {
    width: 11px;
    height: 100%;
    margin-left: 3px;
    flex: none;
}
.num {
    width: 29px;
    padding-left: 6px;
    flex: none;
    font-size: 10px;
}
.t-ic {
    width: 15px;
    flex: none;
    text-align: center;
    font: 700 11px "Liberation Serif", serif;
    color: #c5c5c5;
}
.thumb {
    width: 13px;
    height: 11px;
    margin: 0 2px 0 -1px;
    flex: none;
    background: #8e99a8;
    border: 2px solid #c8ccd0;
}
.name {
    width: 97px;
    flex: none;
    padding-left: 3px;
    color: #b5b5b5;
}
.name-edit {
    display: block;
    width: 92px;
    margin-left: -3px;
    background: #d8d8d8;
    color: #222;
    padding-left: 2px;
}
.name-img {
    display: flex;
    align-items: center;
    overflow: hidden;
}
.comp-ic {
    width: 9px;
    height: 9px;
    margin: 0 5px 0 -1px;
    flex: none;
    border: 2px solid #888;
    background: #222;
}
.s-ic {
    width: 12px;
    height: 11px;
    flex: none;
}
.s-dim {
    color: #555;
}
.s-gap {
    width: 12px;
    height: 11px;
    flex: none;
    background: #262626;
}
.s-slash {
    width: 14px;
    height: 11px;
    flex: none;
    color: #d0d0d0;
    background: #262626;
}
.b1, .b2, .b3 {
    width: 9px;
    height: 11px;
    flex: none;
    background: #232323;
}
.b1 {
    margin-left: 26px;
}
.b2 {
    margin-left: 1px;
}
.mode, .matte, .parent {
    height: 12px;
    flex: none;
    padding: 0 3px 0 6px;
    background: #070707;
    border-radius: 2px;
    display: flex;
    align-items: center;
    justify-content: space-between;
    color: #9c9c9c;
}
.mode svg, .matte svg, .parent svg {
    width: 9px;
    height: 9px;
    flex: none;
    color: #c5c5c5;
}
.mode b, .matte b, .parent b {
    font-weight: 400;
    overflow: hidden;
}
.mode {
    width: 55px;
    margin-left: 23px;
}
.b3 {
    margin-left: 10px;
}
.spiral {
    width: 15px;
    height: 11px;
    flex: none;
    color: #8f8f8f;
}
.matte {
    width: 55px;
}
.m-box {
    width: 12px;
    height: 11px;
    margin-left: 4px;
    flex: none;
}
.m-on {
    background: radial-gradient(circle, #111 40%, #ccc 45%);
}
.sp2 {
    margin-left: 16px;
    width: 17px;
}
.parent {
    width: 73px;
    margin-left: 1px;
}
.tl-right {
    flex: 1;
    position: relative;
}
.tl-nav {
    margin: 6px 17px 0 4px;
    height: 7px;
    background: #3a3a33;
}
.nav-fill {
    height: 100%;
    margin-left: 79px;
    background: #666;
    position: relative;
}
.nav-fill::before, .nav-fill::after {
    content: "";
    position: absolute;
    top: 0;
    width: 5px;
    height: 7px;
    border-radius: 2px;
    background: #4a93e8;
}
.nav-fill::before {
    left: -2px;
}
.nav-fill::after {
    right: -2px;
}
.tl-ruler {
    height: 17px;
    margin-left: -2.400px;
    display: flex;
    color: #999;
    font-size: 9.500px;
    letter-spacing: 0;
}
.tl-ruler span {
    width: 62.800px;
    height: 100%;
    position: relative;
    text-align: center;
    line-height: 15px;
}
.tl-ruler span::after {
    content: "";
    position: absolute;
    left: 50%;
    bottom: 0;
    height: 5px;
    width: 1px;
    background: #777;
}
.tl-work {
    width: 376px;
    height: 13px;
    background: #6a6a6a;
    position: relative;
}
.work-cap {
    position: absolute;
    right: -3px;
    top: 0;
    width: 5px;
    height: 13px;
    border-radius: 2px;
    background: #4a93e8;
}
.bars {
    margin-top: 4px;
    width: 377px;
}
.bar {
    height: 14.125px;
    border-bottom: 1px solid #3c1119;
}
.bar-red {
    background: #6e2e39;
}
.bar-on {
    background: #923a49;
}
.bar-tan {
    background: #6a6352;
    border-bottom-color: #33301f;
}
.playhead {
    position: absolute;
    left: 374px;
    top: 30px;
    bottom: 1px;
    width: 1px;
    background: #4a8fdb;
}
.play-top {
    position: absolute;
    left: 369px;
    top: 15px;
    width: 10px;
    height: 11px;
    color: #4a93e8;
}
.end-flag {
    position: absolute;
    left: 381px;
    top: 32px;
    width: 10px;
    height: 12px;
    color: #b5b5b5;
}
.end-mark {
    position: absolute;
    left: 380px;
    top: 49px;
    width: 12px;
    height: 11px;
    color: #c5c5c5;
}
.tl-vscroll {
    position: absolute;
    left: 380px;
    top: 110px;
    width: 13px;
    height: 48px;
    background: #444;
}
.tl-foot {
    height: 14px;
    display: flex;
    align-items: center;
    background: #1b1b1b;
}
.foot-left {
    width: 624px;
    display: flex;
    align-items: center;
    padding-left: 4px;
    gap: 5px;
    color: #9a9a9a;
}
.foot-left svg {
    width: 12px;
    height: 12px;
}
.fl-on {
    background: #3c3c3c;
    border-radius: 2px;
}
.braces {
    width: 10px;
    white-space: nowrap;
}
.render {
    margin-left: 17px;
    color: #a5a5a5;
    letter-spacing: 0;
}
.render b {
    color: #69b070;
    font-weight: 500;
}
.foot-zoom {
    width: 89px;
    display: flex;
    align-items: center;
    color: #b5b5b5;
}
.foot-zoom svg {
    width: 8px;
    height: 5px;
    margin-left: 4px;
}
.fz-short {
    width: 6px;
    height: 1px;
    background: #666;
    margin: 0 3px 0 7px;
}
.fz-knob {
    width: 8px;
    height: 8px;
    border: 2px solid #ccc;
    border-radius: 50%;
}
.fz-long {
    width: 27px;
    height: 1px;
    background: #666;
    margin: 0 4px;
}
.foot-zoom .fz-big {
    width: 14px;
    height: 7px;
    margin: 0;
}
.tl-hscroll {
    width: 228px;
    height: 14px;
    background: #444;
}

/* right column */
.preview {
    height: 44px;
    margin-bottom: 4px;
}
.p-head {
    height: 19px;
    padding-left: 10px;
    display: flex;
    align-items: center;
    gap: 8px;
    color: #a8a8a8;
}
.transport {
    display: flex;
    gap: 9px;
    padding: 5px 0 0 38px;
    color: #a5a5a5;
}
.transport svg {
    width: 11px;
    height: 11px;
}
.align {
    height: 576px;
    color: #a8a8a8;
}
.a-head {
    height: 18px;
    padding: 0 15px 0 10px;
    display: flex;
    align-items: center;
    justify-content: space-between;
    color: #bdbdbd;
}
.align-to {
    height: 18px;
    margin-top: 9px;
    padding-left: 5px;
    display: flex;
    align-items: center;
}
.align-label {
    width: 69px;
    white-space: nowrap;
}
.dark-sel {
    width: 86px;
    height: 18px;
    padding: 0 6px;
    background: #070707;
    border-radius: 2px;
    display: flex;
    align-items: center;
    justify-content: space-between;
    color: #b5b5b5;
}
.dark-sel svg {
    width: 10px;
    height: 10px;
}
.align-icons {
    height: 18px;
    margin-top: 8px;
    padding-left: 7px;
    display: flex;
    align-items: center;
    gap: 15px;
    color: #8f8f8f;
}
.align-icons svg {
    width: 14px;
    height: 14px;
}
.rot {
    transform: rotate(90deg) scaleY(-1);
}
.rot-b {
    transform: rotate(-90deg);
}
.sep {
    height: 1px;
    background: #111;
}
.sep-short {
    width: 158px;
    margin: 8px 0 0 8px;
}
.dist {
    height: 15px;
    margin-top: 7px;
    padding-left: 5px;
    line-height: 16px;
}
.props-head {
    height: 20px;
    margin-top: 1px;
    border-top: 1px solid #0f0f0f;
    padding: 0 15px 0 10px;
    display: flex;
    align-items: center;
    justify-content: space-between;
    color: #bdbdbd;
}
.props-title {
    width: 220px;
    white-space: nowrap;
    letter-spacing: -.42px;
}
.lt-head {
    height: 17px;
    padding: 1px 0 0 9px;
    display: flex;
    align-items: center;
    color: #b5b5b5;
}
.reset {
    margin-left: 51px;
    color: #3d78c8;
}
.prop {
    height: 16.750px;
    display: flex;
    align-items: center;
}
.watch {
    width: 11px;
    height: 11px;
    margin-left: 20px;
    color: #8f8f8f;
}
.keys {
    width: 49px;
    padding-left: 12px;
    display: flex;
    align-items: center;
    gap: 4px;
}
.keys svg {
    width: 6px;
    height: 7px;
}
.k-dim {
    color: #555;
}
.p-name {
    width: 78px;
    margin-left: 18px;
    color: #a0a0a0;
}
.keys + .p-name {
    margin-left: 0;
}
.p-link {
    display: flex;
    align-items: center;
    justify-content: space-between;
    padding-right: 7px;
}
.p-link svg {
    width: 12px;
    height: 8px;
    fill: none;
    stroke: #3d78c8;
}
.val {
    width: 32px;
    margin-right: 10px;
    color: #3d78c8;
    border-bottom: 1px solid #3c3c3c;
    line-height: 12px;
    padding-left: 1px;
}
.val-wide {
    width: 42px;
}
.sep-props {
    width: 232px;
    margin: 3px 0 0 8px;
}
.s-head {
    height: 25px;
    padding: 0 22px 0 9px;
    display: flex;
    align-items: center;
    justify-content: space-between;
    color: #bdbdbd;
}
.s-text {
    height: 26px;
    padding-top: 3px;
}
.font-sel {
    width: 188px;
    height: 18px;
    margin: 1px 0 0 10px;
    background: #0c0c0c;
    display: flex;
    align-items: center;
    justify-content: space-between;
    padding-left: 6px;
    color: #a5a5a5;
}
.font-sel i {
    width: 18px;
    height: 100%;
    background: #050505;
    padding: 4px;
    color: #ccc;
}
.font-sel svg {
    width: 10px;
    height: 10px;
}
.covered {
    height: 136px;
    padding-top: 129px;
}
.stub {
    width: 48px;
    height: 1px;
    margin-left: 18px;
    background: #111;
}
.sep-para {
    width: 230px;
    margin-left: 10px;
}
.s-para {
    height: 27px;
    padding-top: 2px;
}
.para-btns {
    height: 20px;
    padding-left: 16px;
    display: flex;
    align-items: center;
    gap: 1px;
    color: #8f8f8f;
}
.para-btns span {
    width: 20px;
    height: 20px;
    display: flex;
    align-items: center;
    justify-content: center;
    border-radius: 3px;
}
.para-btns svg {
    width: 13px;
    height: 13px;
}
.pb-on {
    background: #555;
    color: #c5c5c5;
}
.btn-more, .btn-add {
    margin-left: 16px;
    background: #0d0d0d;
    border-radius: 3px;
    display: flex;
    align-items: center;
    color: #b0b0b0;
}
.btn-more {
    width: 52px;
    height: 19px;
    margin-top: 7px;
    padding-left: 5px;
}
.dots {
    width: 19px;
    font-size: 7px;
    letter-spacing: .5px;
}
.sep-more {
    width: 230px;
    margin: 6px 0 0 10px;
}
.s-anim {
    height: 24px;
    padding-top: 1px;
}
.btn-add {
    width: 87px;
    height: 20px;
    margin-top: 7px;
    padding-left: 7px;
}
.plus {
    width: 17px;
    font-size: 14px;
    color: #d5d5d5;
}
.sep-full {
    height: 1px;
    margin-top: 15px;
    background: #0e0e0e;
}
.audio {
    height: 20px;
    line-height: 20px;
    padding-left: 10px;
    color: #a8a8a8;
}
.scroll-thumb {
    position: absolute;
    right: 1px;
    top: 0;
    width: 6px;
    height: 332px;
    background: #444;
}
.fx-presets {
    height: 23px;
    margin-top: 1px;
    padding: 0 15px 0 10px;
    display: flex;
    align-items: center;
    justify-content: space-between;
    color: #bbb;
}

/* title card laid over the window */
.caption {
    position: absolute;
    left: 896px;
    top: 390px;
    width: 384px;
    height: 132px;
    background: #1f1f1f;
    color: #f2f2f2;
    font: 400 20px Inter, sans-serif;
    letter-spacing: 0;
    padding: 42px 0 0 109px;
}
```
